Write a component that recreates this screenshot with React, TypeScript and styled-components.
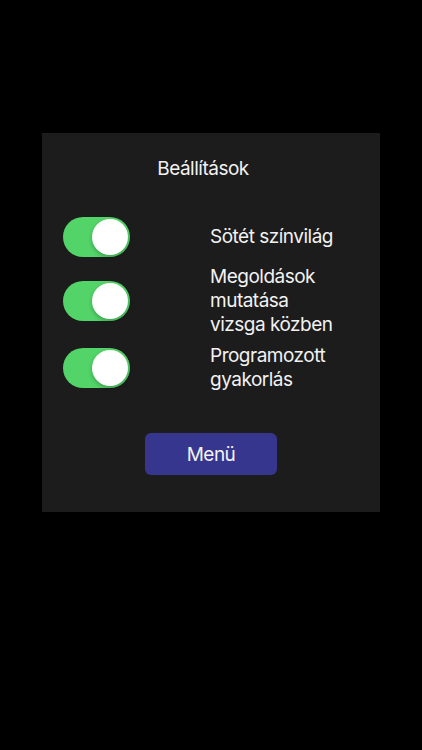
import React, { useState } from 'react';
import styled, { createGlobalStyle } from 'styled-components';

const GlobalStyle = createGlobalStyle`
  html, body {
    margin: 0;
    padding: 0;
    background: #000;
  }
  body {
    font-family: Inter, "Noto Sans", "Liberation Sans", sans-serif;
    -webkit-font-smoothing: antialiased;
  }
`;

const Screen = styled.div`
  width: 422px;
  height: 750px;
  background: #000;
  padding-top: 133px;
  box-sizing: border-box;
`;

const Panel = styled.div`
  width: 338px;
  margin: 0 auto;
  background: #1c1c1c;
  padding: 24px 21px 37px;
  box-sizing: border-box;
  display: flex;
  flex-direction: column;
  align-items: center;
`;

const Title = styled.h1`
  margin: 0 16px 36px 0;
  font-size: 19px;
  line-height: 24px;
  font-weight: 400;
  letter-spacing: -0.5px;
  color: #f2f2f2;
`;

const List = styled.div`
  width: 100%;
  display: flex;
  flex-direction: column;
  gap: 7.5px;
`;

const Row = styled.div`
  display: grid;
  grid-template-columns: 147px 1fr;
  align-items: center;
`;

const Label = styled.span`
  font-size: 19px;
  line-height: 24px;
  letter-spacing: -0.5px;
  color: #f2f2f2;
`;

const Track = styled.button<{ $on: boolean }>`
  width: 67px;
  height: 40px;
  border: none;
  padding: 0;
  border-radius: 20px;
  background: ${p => (p.$on ? '#53d469' : '#3a3a3c')};
  position: relative;
  cursor: pointer;
`;

const Knob = styled.span<{ $on: boolean }>`
  position: absolute;
  top: 2px;
  left: ${p => (p.$on ? '29px' : '2px')};
  width: 36px;
  height: 36px;
  border-radius: 50%;
  background: #fff;
  box-shadow: 0 2px 4px rgba(0, 0, 0, 0.25);
  transition: left 0.2s ease;
`;

const MenuButton = styled.button`
  margin-top: 41px;
  width: 132px;
  height: 42px;
  border: none;
  border-radius: 6px;
  background: #36368f;
  color: #f2f2f2;
  font-family: inherit;
  font-size: 19px;
  letter-spacing: -0.5px;
  cursor: pointer;
`;

const settings = [
  { key: 'dark', label: ['Sötét színvilág'] },
  { key: 'solutions', label: ['Megoldások', 'mutatása', 'vizsga közben'] },
  { key: 'programmed', label: ['Programozott', 'gyakorlás'] },
];

export default function App() {
  const [values, setValues] = useState<Record<string, boolean>>({
    dark: true,
    solutions: true,
    programmed: true,
  });

  return (
    <>
      <GlobalStyle />
      <Screen>
        <Panel>
          <Title>Beállítások</Title>
          <List>
            {settings.map(s => (
              <Row key={s.key}>
                <Track
                  $on={values[s.key]}
                  onClick={() => setValues(v => ({ ...v, [s.key]: !v[s.key] }))}
                >
                  <Knob $on={values[s.key]} />
                </Track>
                <Label>
                  {s.label.map((line, i) => (
                    <React.Fragment key={i}>
                      {i > 0 && <br />}
                      {line}
                    </React.Fragment>
                  ))}
                </Label>
              </Row>
            ))}
          </List>
          <MenuButton>Menü</MenuButton>
        </Panel>
      </Screen>
    </>
  );
}
